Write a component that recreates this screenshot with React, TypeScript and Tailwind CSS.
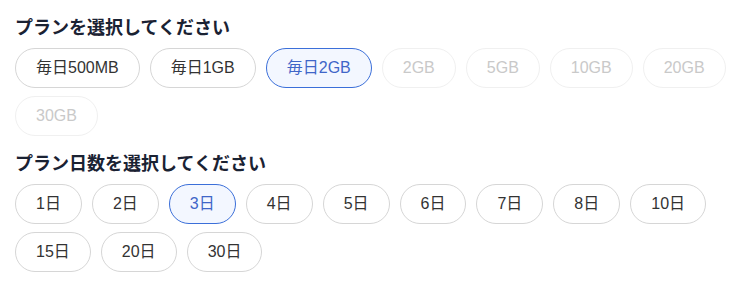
import React from "react";

type Opt = { label: string; selected?: boolean; disabled?: boolean };

const plans: Opt[] = [
  { label: "毎日500MB" },
  { label: "毎日1GB" },
  { label: "毎日2GB", selected: true },
  { label: "2GB", disabled: true },
  { label: "5GB", disabled: true },
  { label: "10GB", disabled: true },
  { label: "20GB", disabled: true },
  { label: "30GB", disabled: true },
];

const days: Opt[] = [
  "1日", "2日", "3日", "4日", "5日", "6日", "7日", "8日", "10日", "15日", "20日", "30日",
].map((l) => ({ label: l, selected: l === "3日" }));

function Chip({ o }: { o: Opt }) {
  const base =
    "h-10 px-5 rounded-full border flex items-center justify-center text-[16px] leading-none whitespace-nowrap";
  if (o.selected)
    return (
      <button className={`${base} border-[#3b6fd9] bg-[#f3f7ff] text-[#3f66c8]`}>{o.label}</button>
    );
  if (o.disabled)
    return (
      <button className={`${base} border-[#f0f0f0] bg-white text-[#c9c9c9]`}>{o.label}</button>
    );
  return <button className={`${base} border-[#d6d6d6] bg-white text-[#333333]`}>{o.label}</button>;
}

function Section({ title, opts }: { title: string; opts: Opt[] }) {
  return (
    <div>
      <h2 className="text-[18px] leading-6 font-bold text-[#1a2233] mb-2">{title}</h2>
      <div className="flex flex-wrap gap-x-[10px] gap-y-2">
        {opts.map((o) => (
          <Chip key={o.label} o={o} />
        ))}
      </div>
    </div>
  );
}

export default function App() {
  return (
    <div
      className="w-[734px] h-[281px] bg-white pl-[15px] pr-2 pt-4 flex flex-col gap-4"
      style={{ fontFamily: '"Liberation Sans", Arial, "Noto Sans CJK JP", sans-serif' }}
    >
      <Section title="プランを選択してください" opts={plans} />
      <Section title="プラン日数を選択してください" opts={days} />
    </div>
  );
}
